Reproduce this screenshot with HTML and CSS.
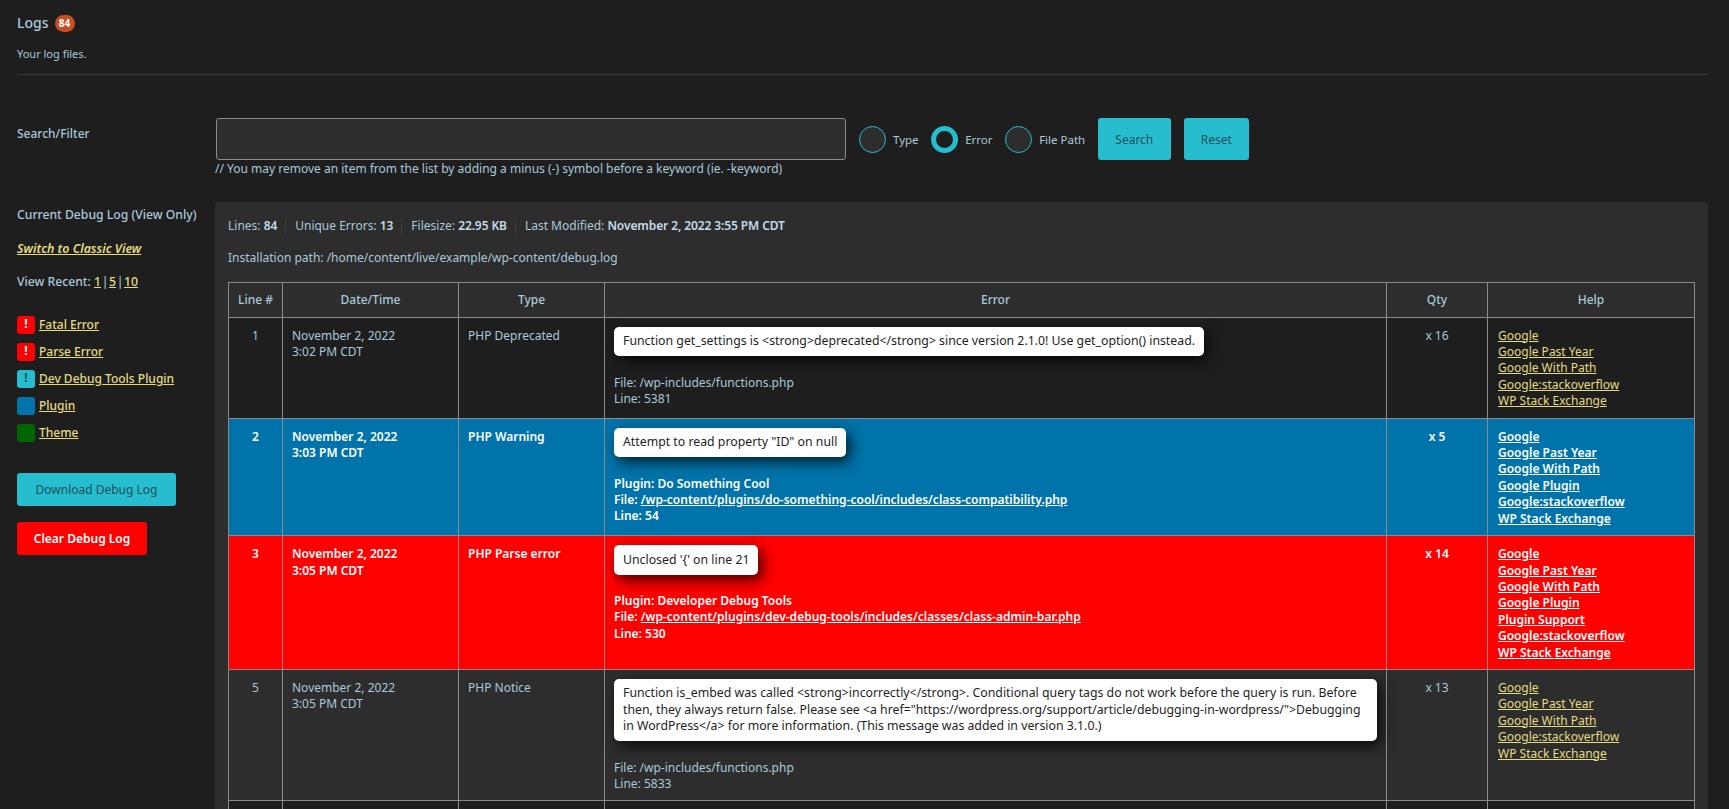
FILE: index.html
```html
<!DOCTYPE html>
<html lang="en">
<head>
  <meta charset="UTF-8">
  <title>Logs</title>
  <link rel="stylesheet" href="styles.css">
</head>
<body>
  <div class="page-head">
    <h1 class="page-title">Logs <span class="count-badge">84</span></h1>
    <p class="page-desc">Your log files.</p>
  </div>

  <form class="search-row">
    <label class="side-col search-label" for="search">Search/Filter</label>
    <div class="search-main">
      <div class="search-controls">
        <input id="search" class="search-input" type="text">
        <label class="radio-item"><input type="radio" name="by"> Type</label>
        <label class="radio-item"><input type="radio" name="by" checked> Error</label>
        <label class="radio-item"><input type="radio" name="by"> File Path</label>
        <button class="btn btn-search" type="button">Search</button>
        <button class="btn btn-reset" type="button">Reset</button>
      </div>
      <p class="search-hint">// You may remove an item from the list by adding a minus (-) symbol before a keyword (ie. -keyword)</p>
    </div>
  </form>

  <div class="log-layout">
    <aside class="side-col sidebar">
      <div class="side-line">Current Debug Log (View Only)</div>
      <div class="side-line classic-link"><a href="#"><em><strong>Switch to Classic View</strong></em></a></div>
      <div class="side-line">View Recent: <span class="recent-links"><a href="#">1</a> | <a href="#">5</a> | <a href="#">10</a></span></div>
      <ul class="legend">
        <li><span class="swatch swatch-red">!</span><a href="#">Fatal Error</a></li>
        <li><span class="swatch swatch-red">!</span><a href="#">Parse Error</a></li>
        <li><span class="swatch swatch-teal">!</span><a href="#">Dev Debug Tools Plugin</a></li>
        <li><span class="swatch swatch-blue"></span><a href="#">Plugin</a></li>
        <li><span class="swatch swatch-green"></span><a href="#">Theme</a></li>
      </ul>
      <button class="btn btn-download" type="button">Download Debug Log</button>
      <button class="btn btn-clear" type="button">Clear Debug Log</button>
    </aside>

    <main class="log-panel">
      <div class="log-stats">
        <span>Lines: <strong>84</strong></span>
        <span>Unique Errors: <strong>13</strong></span>
        <span>Filesize: <strong>22.95 KB</strong></span>
        <span>Last Modified: <strong>November 2, 2022 3:55 PM CDT</strong></span>
      </div>
      <p class="log-path">Installation path: /home/content/live/example/wp-content/debug.log</p>

      <table class="log-table">
        <thead>
          <tr>
            <th class="col-line">Line #</th>
            <th class="col-date">Date/Time</th>
            <th class="col-type">Type</th>
            <th>Error</th>
            <th class="col-qty">Qty</th>
            <th class="col-help">Help</th>
          </tr>
        </thead>
        <tbody>
          <tr class="row-dark">
            <td class="center">1</td>
            <td>November 2, 2022<br>3:02 PM CDT</td>
            <td>PHP Deprecated</td>
            <td>
              <div class="err-msg">Function get_settings is &lt;strong&gt;deprecated&lt;/strong&gt; since version 2.1.0! Use get_option() instead.</div>
              File: /wp-includes/functions.php<br>Line: 5381
            </td>
            <td class="center">x 16</td>
            <td class="help-links">
              <a href="#">Google</a><a href="#">Google Past Year</a><a href="#">Google With Path</a><a href="#">Google:stackoverflow</a><a href="#">WP Stack Exchange</a>
            </td>
          </tr>
          <tr class="row-plugin">
            <td class="center">2</td>
            <td>November 2, 2022<br>3:03 PM CDT</td>
            <td>PHP Warning</td>
            <td>
              <div class="err-msg">Attempt to read property "ID" on null</div>
              Plugin: Do Something Cool<br>
              File: <a href="#">/wp-content/plugins/do-something-cool/includes/class-compatibility.php</a><br>
              Line: 54
            </td>
            <td class="center">x 5</td>
            <td class="help-links">
              <a href="#">Google</a><a href="#">Google Past Year</a><a href="#">Google With Path</a><a href="#">Google Plugin</a><a href="#">Google:stackoverflow</a><a href="#">WP Stack Exchange</a>
            </td>
          </tr>
          <tr class="row-fatal">
            <td class="center">3</td>
            <td>November 2, 2022<br>3:05 PM CDT</td>
            <td>PHP Parse error</td>
            <td>
              <div class="err-msg">Unclosed '{' on line 21</div>
              Plugin: Developer Debug Tools<br>
              File: <a href="#">/wp-content/plugins/dev-debug-tools/includes/classes/class-admin-bar.php</a><br>
              Line: 530
            </td>
            <td class="center">x 14</td>
            <td class="help-links">
              <a href="#">Google</a><a href="#">Google Past Year</a><a href="#">Google With Path</a><a href="#">Google Plugin</a><a href="#">Plugin Support</a><a href="#">Google:stackoverflow</a><a href="#">WP Stack Exchange</a>
            </td>
          </tr>
          <tr class="row-alt">
            <td class="center">5</td>
            <td>November 2, 2022<br>3:05 PM CDT</td>
            <td>PHP Notice</td>
            <td>
              <div class="err-msg">Function is_embed was called &lt;strong&gt;incorrectly&lt;/strong&gt;. Conditional query tags do not work before the query is run. Before then, they always return false. Please see &lt;a href="https://wordpress.org/support/article/debugging-in-wordpress/"&gt;Debugging<br>in WordPress&lt;/a&gt; for more information. (This message was added in version 3.1.0.)</div>
              File: /wp-includes/functions.php<br>Line: 5833
            </td>
            <td class="center">x 13</td>
            <td class="help-links">
              <a href="#">Google</a><a href="#">Google Past Year</a><a href="#">Google With Path</a><a href="#">Google:stackoverflow</a><a href="#">WP Stack Exchange</a>
            </td>
          </tr>
          <tr class="row-dark row-tail">
            <td></td><td></td><td></td><td></td><td></td><td></td>
          </tr>
        </tbody>
      </table>
    </main>
  </div>
</body>
</html>
```

FILE: styles.css
```css
body {
  margin: 0;
  height: 809px;
  overflow: hidden;
  background-color: #1e1e1e;
  color: #a9c9d9;
  font-family: "Noto Sans", sans-serif;
  font-size: 12px;
  line-height: 16.4px;
}

a {
  color: #e5dc82;
}

strong {
  font-weight: 600;
}

.page-head {
  margin: 0 21px 0 17px;
  padding-top: 14px;
  height: 60px;
  border-bottom: 1px solid #3c3c3c;
}

.page-title {
  margin: 0;
  font-size: 14px;
  line-height: 18px;
  font-weight: 500;
  display: flex;
  align-items: center;
  gap: 6px;
}

.count-badge {
  width: 20px;
  height: 17px;
  border-radius: 9px;
  background-color: #c94f1f;
  color: #fff;
  font-size: 10px;
  line-height: 17px;
  font-weight: 700;
  text-align: center;
}

.page-desc {
  margin: 14px 0 0;
  font-size: 11px;
}

.search-row {
  display: flex;
  padding: 43px 21px 0 17px;
}

.side-col {
  width: 198px;
  flex: none;
}

.search-label {
  padding-top: 8px;
  font-weight: 500;
}

.search-controls {
  display: flex;
  align-items: center;
}

.search-input {
  width: 630px;
  height: 42px;
  box-sizing: border-box;
  margin: 0 13px 0 1px;
  background-color: #2d2d2d;
  border: 1px solid #8b8b8b;
  border-radius: 3px;
}

.radio-item {
  display: flex;
  align-items: center;
  gap: 7px;
  margin-right: 12.6px;
  font-size: 11.5px;
  padding-top: 3px;
}

.radio-item input {
  appearance: none;
  width: 27px;
  height: 27px;
  box-sizing: border-box;
  margin: -3px 0 0;
  border: 1px solid #26bdcf;
  border-radius: 50%;
  background-color: #2d2d2d;
}

.radio-item input:checked {
  border-width: 5px;
  background-color: #1e1e1e;
}

.btn {
  border: none;
  border-radius: 3px;
  font-family: inherit;
  font-size: 12px;
}

.btn-search,
.btn-reset,
.btn-download {
  background-color: #26bdcf;
  color: #1f4f5a;
}

.btn-search {
  width: 73px;
  height: 42px;
}

.btn-reset {
  width: 65px;
  height: 42px;
  margin-left: 13px;
}

.search-hint {
  margin: 1px 0 0;
}

.log-layout {
  display: flex;
  padding: 25px 21px 0 17px;
}

.sidebar {
  padding-top: 5px;
}

.side-line {
  margin-bottom: 16.9px;
  font-weight: 500;
  font-size: 12.2px;
}

.classic-link {
  font-size: 12.4px;
}

.recent-links {
  word-spacing: -2.5px;
}

.legend {
  list-style: none;
  margin: 26px 0 31px;
  padding: 0;
}

.legend li {
  display: flex;
  align-items: center;
  gap: 4px;
  height: 18px;
  margin-bottom: 9px;
  font-weight: 500;
}

.swatch {
  width: 18px;
  height: 18px;
  border-radius: 3px;
  font-weight: 700;
  text-align: center;
  line-height: 16px;
}

.swatch-red {
  background-color: #ff0000;
  color: #fff;
}

.swatch-teal {
  background-color: #26bdcf;
  color: #1f4f5a;
}

.swatch-blue {
  background-color: #0073aa;
}

.swatch-green {
  background-color: #006400;
}

.btn-download {
  display: block;
  width: 159px;
  height: 33px;
}

.btn-clear {
  display: block;
  width: 130px;
  height: 33px;
  margin-top: 16px;
  background-color: #ff0000;
  color: #fff;
  font-weight: 600;
}

.log-panel {
  flex: 1;
  padding: 16px 13px 0;
  background-color: #2d2d2d;
  border-radius: 4px 4px 0 0;
}

.log-stats {
  display: flex;
}

.log-stats span {
  padding-right: 8px;
  margin-right: 9px;
  border-right: 1px solid #3c3c3c;
}

.log-stats span:last-child {
  border-right: none;
}

.log-stats strong {
  color: #c3dbe6;
  letter-spacing: -0.1px;
}

.log-path {
  margin: 15px 0 16px;
}

.log-table {
  width: 100%;
  table-layout: fixed;
  border-collapse: collapse;
}

.log-table th,
.log-table td {
  border: 1px solid #8b8b8b;
  padding: 10px 9px 8px;
  vertical-align: top;
  overflow-wrap: break-word;
}

.log-table th {
  padding: 8.5px 9px;
  font-weight: 500;
}

.col-line {
  width: 35px;
}

.col-date {
  width: 157px;
}

.col-type {
  width: 127px;
}

.col-qty {
  width: 82px;
}

.col-help {
  width: 188px;
}

.center {
  text-align: center;
}

.log-table .help-links {
  padding-left: 10px;
}

.help-links a {
  display: block;
}

.err-msg {
  margin: -1px 0 18.5px;
  padding: 6.5px 9px;
  width: fit-content;
  background-color: #fff;
  color: #1e1e1e;
  font-size: 12.3px;
  font-weight: 400;
  border-radius: 5px;
  box-shadow: 4px 5px 14px rgba(0, 0, 0, 0.75);
}

.row-dark {
  background-color: #1e1e1e;
}

.row-alt {
  background-color: #2d2d2d;
}

.row-plugin,
.row-fatal {
  color: #fff;
  font-weight: 600;
}

.row-plugin a,
.row-fatal a {
  color: #fff;
}

.row-plugin {
  background-color: #0073aa;
}

.row-fatal {
  background-color: #ff0000;
}

.log-table .row-tail td {
  height: 8px;
  padding: 0;
  border-bottom: none;
}
```
